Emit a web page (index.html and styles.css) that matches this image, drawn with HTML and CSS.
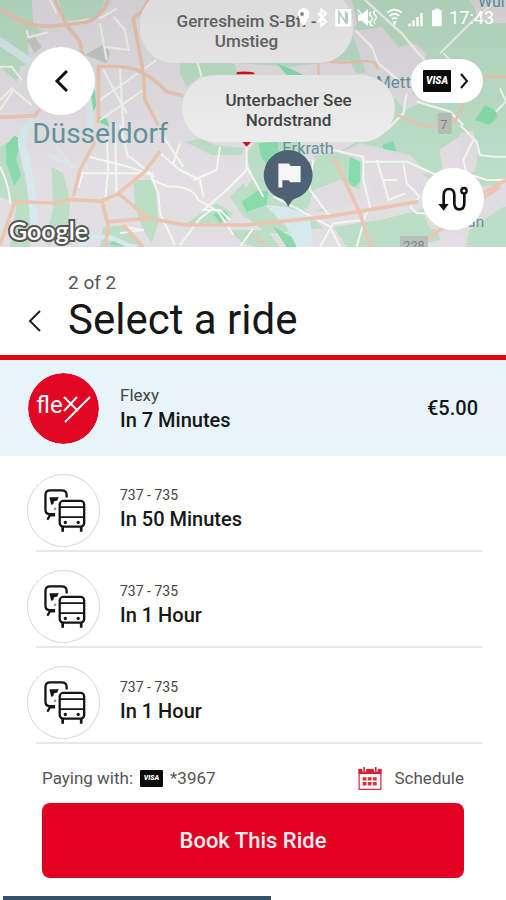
FILE: index.html
```html
<!DOCTYPE html>
<html lang="en">
<head>
<meta charset="utf-8">
<meta name="viewport" content="width=device-width, initial-scale=1">
<title>Select a ride</title>
<link rel="stylesheet" href="styles.css">
</head>
<body>
<svg class="symbols" aria-hidden="true">
  <symbol id="transit" viewBox="126 70 132 136">
    <g fill="none" stroke="#151515" stroke-width="7" stroke-linejoin="round">
      <path d="M165 149h-18q-11-1-11-13V91q0-14 14-14h35q15 0 15 14v8"/>
      <path d="M151 149l-9 17M149 153h16"/>
      <rect x="179" y="109" width="74" height="78" rx="11"/>
      <path d="M179 128h74M179 158h74" stroke-width="5"/>
      <path d="M188 187v15M244 187v15" stroke-width="8"/>
    </g>
    <path d="M148 98h28l-4 10-10 2-3 10h-6z" fill="#151515"/>
    <circle cx="165" cy="133" r="4" fill="#999"/>
    <circle cx="196" cy="174" r="5" fill="#151515"/>
    <circle cx="235" cy="174" r="5" fill="#151515"/>
  </symbol>
</svg>

<main class="app">
  <section class="map" aria-label="Map">
    <svg class="map-canvas" viewBox="0 0 1518 741" preserveAspectRatio="xMidYMid slice" aria-hidden="true">
      <rect width="1518" height="741" fill="#e2dfe2"/>
      <!-- parks and fields -->
      <g fill="#bcdec6">
        <path d="M0 0h95l5 70 25 25-40 20 0 45 15 30-40 10-10 45-50-45z"/>
        <path d="M175 0h140l-20 45-50 20-50-5z"/>
        <path d="M540 190h160l20 35-120 5-40 30-20-40z"/>
        <path d="M700 188h260l90-58 15-45 35-85h318l10 40 45 30h45v340l-40 60-50-40-50-20-60 40 10 60-60 60-110-70-80-20-100 20-40-30 90-20 100-60 60-100-60-70-60 0-20-40-180 20z"/>
        <path d="M1055 0h345l20 65-100 90-70-15-60-60-90 25-30-40z"/>
        <path d="M770 425h130l20 60 90-10 80 0-10 90-110 70-60-10 60 60 170-25 160-40 20 100-90 21h-190l-40-60-200 20-60-50 30-60-10-60-25-70z"/>
        <path d="M740 560l60-80 20 110-20 60-60 0-40-60z"/>
        <path d="M1420 620h98v121h-120z"/>
        <path d="M1380 370l138 10v170l-70 10-40-40 30-80z"/>
        <path d="M0 440l50-25 20 100 30 50-10 176H30l20-130-50-20z"/>
        <path d="M155 500l35 20 20 80-5 80 10 55h-30l-18-55-18 58-15-10 25-100z"/>
        <path d="M400 540h65l10 130-20 60-30-50-20-60z"/>
        <path d="M555 425l50-10 40 20 90 10-10 20-90 0z"/>
        <path d="M690 590l40-40 20 50 10 60-30-10z"/>
        <path d="M300 741l10-60 60-5 55 65z"/>
        <path d="M560 670l90-60 50 30-20 30z"/>
        <path d="M685 690h115l40 51h-70l-40-10z"/>
      </g>
      <!-- woodland -->
      <g fill="#87dbac">
        <path d="M18 435l25-28 20 10-15 60 15 50-20 30-25-70z"/>
        <path d="M640 642l35-12 10 20-25 20z"/>
        <path d="M830 190l50 20 40 20-60-5z"/>
        <path d="M1425 360l30-45 30 15 8 20-25 25z"/>
        <path d="M1148 435l30-12 12 30-38 8z"/>
        <path d="M1050 470l30 15 0 60-20 18-15-20z"/>
        <path d="M725 605l50-35 30 5-5 40-60 20z"/>
        <path d="M820 680l90 50-10 11h-40z"/>
        <path d="M775 430l60-5v50l-20 30-30-30z"/>
        <path d="M300 350q25 0 28 30l-26-10z"/>
        <path d="M330 735l10-20 60 26z"/>
        <path d="M272 290l12-25 5 50-8 20z"/>
      </g>
      <!-- towns -->
      <g fill="#e0dde0">
        <path d="M1055 95l90-15 50 60 55-8 30 30-15 60-30 60 60 10-80 40-40-50-60-20-30-80z"/>
        <path d="M1410 0h108v50l-70 15z"/>
        <path d="M1380 400l40-10 15 70-10 55-50 10z"/>
        <path d="M1085 470l150 30 70 50-60 40-110 15-20-30z"/>
        <path d="M1270 640l80-60 168-25v60l-130 90-100-20z"/>
        <path d="M940 570l80-30 70 35-10 35-160 25z"/>
        <path d="M1020 460l60-30 150 35 60 60-200-40z"/>
        <path d="M255 165l60-35 15 30-10 30z" fill="#c3c9c5"/>
        <path d="M80 120l25-10 20 30-20 20z" fill="#cac8c8"/>
      </g>
      <!-- water -->
      <g fill="none" stroke="#d8e9ed" stroke-width="24" stroke-linecap="round">
        <path d="M0 125l90 60"/>
        <path d="M265 300q8 50 5 80" stroke-width="20"/>
        <path d="M90 370q-35 35-20 80 25 80 33 230"/>
        <path d="M145 465l80 35M170 440l45 60" stroke-width="7"/>
        <path d="M240 735q50-40 110-15 40 20 55 20" stroke-width="14"/>
      </g>
      <path d="M795 615l60 5 75 25 10 96h-50l-30-60z" fill="#d8e9ed"/>
      <!-- local streets -->
      <g fill="none" stroke="#f5f5f3" stroke-width="6" stroke-linejoin="round">
        <path d="M80 90l5 22 60-15M200 70l110-20 40-25M300 70l20 110M340 50l35 40 10 60M310 140l80 10"/>
        <path d="M150 0l20 40M0 200h35l30 40M0 300l35-35 60 50M0 330l40-60"/>
        <path d="M310 210l70 130M300 300l170-120M300 360l130-90M360 205l10 190M590 180l15 50"/>
        <path d="M240 520h220M455 540l50 20q70-5 90 40l60 35 45 70M250 515l-15 50M320 400l5 110-10 90M345 370l5 215M360 375l25 100"/>
        <path d="M265 470l120 30 80 30M390 470l60 50 25 60 5 60 45 95M480 460l60 50 60 30 10 50M520 490l20-60M490 410l60 90"/>
        <path d="M740 440l0 70-60 60-70 60 50 0 30 30M740 500l50 90M660 440l-10 70-70 30M540 735l60-80 40-30"/>
        <path d="M370 680l60 10-70 10M720 741l39-55M0 500q30 60 30 110"/>
        <path d="M1095 0l110 100 50 60 80 90-85 20M1065 90l50 50 20 50 60 50M1220 280l-10 60-50 50-160 30M1250 305l100 30 40 40" stroke-width="7"/>
        <path d="M1320 160l90-90 70-60M1330 160l20 20"/>
        <path d="M1000 450l90 20 0 70 20 80-20 40-90 10-40 71M1090 485h130l90 40M1130 480l25 80 10 40 50-20M1210 490l10 60 40 40M1150 540h40"/>
        <path d="M1380 375l50 50 10 40 40 5h38M1420 420l-30 60 10 40 60 20h58M1230 620l20 20 60 0M1500 265l18 40-30 30"/>
        <path d="M820 590l60 30 110 60 30 61M940 480l-10 60 0 30 60 80M1090 670l-20 71M1260 590l-30 30"/>
      </g>
      <!-- arterial roads -->
      <g fill="none" stroke="#eac6b2" stroke-width="11" stroke-linejoin="round">
        <path d="M0 30l20 8q60 45 140 40l100-12q45-15 65-66M165 0l35 75 40 50 8 45M445 0q-10 30-45 55l30 165 5 80 40 75M290 200q80-5 120 10 50 20 90 65l50 12M295 205v165M0 352l105-5 15-20"/>
        <path d="M0 735l45-130 120 4 50-10 85 5 50-20 85-70 45-60M220 590l20-80 45-85M305 600l20 80-10 61M325 665l120-10 110 20 180 0 250-25 270-45"/>
        <path d="M355 580l90 75M370 675l60 66M1000 470l80 170 30 101M1518 540l-80 45M1500 560l-60 40-160 120"/>
        <path d="M955 190v35M955 183l70 5 75-5 25 5 10 20M1390 310l-25 55-90 15-85-35M1450 230h68M759 700l40 41" stroke-width="8"/>
      </g>
      <g fill="#b8bfba">
        <rect x="1313" y="338" width="42" height="64" rx="4"/>
        <rect x="1200" y="708" width="84" height="33" rx="4"/>
      </g>
      <g class="map-text">
        <text x="97" y="428" font-size="84">Düsseldorf</text>
        <text x="1128" y="264" font-size="51">Mett</text>
        <text x="847" y="462" font-size="49">Erkrath</text>
        <text x="1434" y="20" font-size="48">Wül</text>
        <text x="1402" y="681" font-size="46">an</text>
        <text x="1321" y="386" font-size="38" class="road-no">7</text>
        <text x="1210" y="749" font-size="38" class="road-no">228</text>
      </g>
      <path d="M710 217q18-5 50 0l5 6h-55z" fill="#d40f20"/>
      <path d="M722 420h36l-18 20z" fill="#d40f20"/>
    </svg>

    <p class="place place-start">Gerresheim S-Bf. -<br>Umstieg</p>
    <p class="place place-end">Unterbacher See<br>Nordstrand</p>

    <svg class="flag-pin" viewBox="0 0 150 172" aria-hidden="true">
      <path d="M75 0a75 75 0 0 1 20 147q-8 3-19 24-11-21-20-24A75 75 0 0 1 75 0z" fill="#4f6275"/>
      <path d="M46 41h32l5 7h30v49H82l-5-6H58v22H46z" fill="#f6f6f6"/>
    </svg>

    <div class="status">
      <svg class="status-icons" viewBox="0 0 450 66" aria-hidden="true">
        <g fill="#fff">
          <path d="M20 3a17 17 0 0 1 17 17c0 15-17 36-17 36S3 35 3 20A17 17 0 0 1 20 3z"/>
          <circle cx="15" cy="21" r="6" fill="#888"/>
          <path d="M115 6h48v52h-48z"/>
          <path d="M183 22h12l18-15v50l-18-15h-12z"/>
          <path d="M334 50h7v8h-7zM346 40h7v18h-7zM358 30h7v28h-7zM370 18h7v40h-7z"/>
          <path d="M405 10h8V5h14v5h7v48h-29z"/>
        </g>
        <path d="M126 50V15l20 31V13M151 50V17" fill="none" stroke="#bcc9c2" stroke-width="5"/>
        <path d="M63 18l24 26-14 12V7l14 12-24 26" fill="none" stroke="#fff" stroke-width="6"/>
        <path d="M182 8l45 50M222 14q-8 8 0 14t0 14q-5 7 0 14M234 10q-8 8 0 14t0 14q-5 7 0 14" fill="none" stroke="#fff" stroke-width="4"/>
        <path d="M271 17q21-18 43 0M278 27q15-13 29 0M285 36q8-7 15 0" fill="none" stroke="#fff" stroke-width="5"/>
        <path d="M287 43l6 13 6-13z" fill="#fff"/>
      </svg>
      <time class="clock">17:43</time>
    </div>

    <button class="round-button map-back" type="button" aria-label="Back">
      <svg class="chevron" viewBox="0 0 14 24" aria-hidden="true"><path d="M13 2L3 12l10 10"/></svg>
    </button>
    <button class="payment-pill" type="button" aria-label="Payment method">
      <span class="visa visa-large">VISA</span>
      <svg class="pill-chevron" viewBox="0 0 10 16" aria-hidden="true"><path d="M2 1l6 7-6 7"/></svg>
    </button>
    <button class="round-button map-route" type="button" aria-label="Show route">
      <svg class="route-icon" viewBox="0 0 90 78" aria-hidden="true">
        <path d="M17 58V28q0-19 16-19t16 19v23q0 19 15 19t15-19V24" fill="none" stroke="#111" stroke-width="8"/>
        <path d="M1 54h31L17 74z" fill="#111"/>
        <circle cx="78" cy="14" r="8" fill="#fff" stroke="#111" stroke-width="7"/>
      </svg>
    </button>
    <span class="google">Google</span>
  </section>

  <header class="header">
    <button class="header-back" type="button" aria-label="Previous step">
      <svg class="header-chevron" viewBox="0 0 14 22" aria-hidden="true"><path d="M12 1L2 11l10 10"/></svg>
    </button>
    <div>
      <p class="step">2 of 2</p>
      <h1 class="title">Select a ride</h1>
    </div>
  </header>

  <section class="rides" aria-label="Rides">
    <article class="ride ride-selected">
      <span class="badge badge-flexy">
        <span class="flexy-name">fle<svg class="flexy-tail" viewBox="0 0 28 30" aria-hidden="true"><path d="M1 4l14 14M1 18L14 4M27 4L2 29"/></svg></span>
      </span>
      <div class="ride-text">
        <p class="ride-line ride-service">Flexy</p>
        <h2 class="ride-time">In 7 Minutes</h2>
      </div>
      <p class="price">€5.00</p>
    </article>
    <article class="ride">
      <span class="badge"><svg class="transit-icon" aria-hidden="true"><use href="#transit"/></svg></span>
      <div class="ride-text">
        <p class="ride-line">737 - 735</p>
        <h2 class="ride-time">In 50 Minutes</h2>
      </div>
    </article>
    <article class="ride">
      <span class="badge"><svg class="transit-icon" aria-hidden="true"><use href="#transit"/></svg></span>
      <div class="ride-text">
        <p class="ride-line">737 - 735</p>
        <h2 class="ride-time">In 1 Hour</h2>
      </div>
    </article>
    <article class="ride">
      <span class="badge"><svg class="transit-icon" aria-hidden="true"><use href="#transit"/></svg></span>
      <div class="ride-text">
        <p class="ride-line">737 - 735</p>
        <h2 class="ride-time">In 1 Hour</h2>
      </div>
    </article>
  </section>

  <footer class="footer">
    <div class="options">
      <p class="paying">Paying with: <span class="visa">VISA</span> *3967</p>
      <button class="schedule" type="button">
        <svg class="calendar" viewBox="0 0 72 72" aria-hidden="true">
          <path d="M2 8h68v62H2z" fill="#fff" stroke="#df3440" stroke-width="4"/>
          <path d="M0 6h72v16H0z" fill="#d9202c"/>
          <path d="M18 0v14M54 0v14" stroke="#fff" stroke-width="12"/>
          <path d="M18 0v14M54 0v14" stroke="#d9202c" stroke-width="5"/>
          <path d="M13 32h12v10H13zM29 32h12v10H29zM45 32h12v10H45zM13 47h12v11H13zM29 47h12v11H29zM45 47h12v11H45z" fill="#d9303c"/>
        </svg>
        Schedule
      </button>
    </div>
    <button class="book" type="button">Book This Ride</button>
    <div class="progress"><span class="progress-bar"></span></div>
  </footer>
</main>
</body>
</html>
```

FILE: styles.css
```css
* { box-sizing: border-box; }

body {
  margin: 0;
  background: #fff;
  color: #171717;
  font-family: Roboto, "Liberation Sans", sans-serif;
}

p, h1, h2 { margin: 0; }

button {
  border: 0;
  padding: 0;
  background: none;
  color: inherit;
  font: inherit;
  cursor: pointer;
}

svg { display: block; }
.symbols { position: absolute; width: 0; height: 0; }

.app {
  display: flex;
  flex-direction: column;
  min-height: 100vh;
}

/* Map */
.map {
  position: relative;
  height: 247px;
  overflow: hidden;
}
.map-canvas { width: 100%; height: 100%; }
.map::after {
  content: "";
  position: absolute;
  inset: 0;
  background: linear-gradient(rgba(0, 0, 0, 0.08), transparent 70%);
  pointer-events: none;
}
.map-text { fill: #64949f; }
.road-no { fill: #7f8582; }

.place {
  position: absolute;
  width: 213px;
  border-radius: 34px;
  background: #efefef;
  color: #454545;
  font-size: 17px;
  font-weight: 500;
  line-height: 20px;
  text-align: center;
}
.place-start { top: -10px; left: 140px; padding: 21px 0 12px; color: #666; }
.place-end { top: 75px; left: 182px; padding: 15px 0 12px; }

.flag-pin {
  position: absolute;
  top: 150px;
  left: 263px;
  width: 50px;
  height: 57px;
}

.status {
  position: absolute;
  z-index: 2;
  top: 7px;
  right: 12px;
  display: flex;
  align-items: center;
  gap: 2px;
  color: #fff;
}
.status-icons { width: 150px; height: 22px; }
.clock { font-size: 18px; line-height: 22px; }

.round-button {
  position: absolute;
  z-index: 2;
  display: grid;
  place-items: center;
  border-radius: 50%;
  background: #fff;
}
.map-back { top: 47px; left: 27px; width: 68px; height: 68px; }
.map-route { top: 168px; right: 22px; width: 62px; height: 62px; }
.chevron { width: 14px; height: 24px; fill: none; stroke: #111; stroke-width: 3; }
.route-icon { width: 30px; height: 26px; }

.payment-pill {
  position: absolute;
  z-index: 2;
  top: 59px;
  right: 23px;
  display: flex;
  align-items: center;
  gap: 8px;
  height: 44px;
  padding: 0 14px 0 12px;
  border-radius: 22px;
  background: #fff;
}
.pill-chevron { width: 10px; height: 16px; fill: none; stroke: #111; stroke-width: 2; }

.visa {
  display: inline-grid;
  place-items: center;
  width: 23px;
  height: 17px;
  border-radius: 1px;
  background: #0b0b0b;
  color: #fff;
  font-size: 7px;
  font-style: italic;
  font-weight: 900;
  line-height: 1;
}
.visa-large { width: 28px; height: 22px; font-size: 10px; }

.google {
  position: absolute;
  z-index: 2;
  top: 215px;
  left: 9px;
  color: #fff;
  font-family: Lato, sans-serif;
  font-size: 25px;
  font-weight: 600;
  line-height: 30px;
  -webkit-text-stroke: 4px #555;
  paint-order: stroke fill;
}

/* Header */
.header {
  display: flex;
  align-items: flex-end;
  height: 113px;
  padding: 0 28px 10px;
  border-bottom: 5px solid #dc0a14;
}
.header-back {
  display: flex;
  align-items: center;
  width: 40px;
  height: 48px;
}
.header-chevron { width: 14px; height: 22px; fill: none; stroke: #222; stroke-width: 2; }
.step { color: #555; font-size: 19px; line-height: 24px; }
.title { font-size: 42px; font-weight: 400; line-height: 50px; }

/* Rides */
.ride {
  position: relative;
  display: flex;
  align-items: center;
  gap: 20px;
  height: 96px;
  padding: 12px 28px 0 27px;
}
.ride:not(.ride-selected)::after {
  content: "";
  position: absolute;
  right: 24px;
  bottom: 0;
  left: 36px;
  height: 2px;
  background: #e8e8e8;
}
.ride-selected { padding-top: 0; background: #e7f4fa; }

.badge {
  display: grid;
  flex: none;
  place-items: center;
  width: 73px;
  height: 73px;
  border: 1px solid #d8d8d8;
  border-radius: 50%;
  background: #fff;
}
.badge-flexy {
  border: 1px solid #e7f4fa;
  background: #e20524;
  background-clip: padding-box;
  color: #fff;
}
.transit-icon { width: 44px; height: 45px; }
.flexy-name {
  display: flex;
  align-items: flex-start;
  font-size: 24px;
  line-height: 24px;
}
.flexy-tail { width: 28px; height: 30px; fill: none; stroke: #fff; stroke-width: 2; }

.ride-text { flex: 1; padding-bottom: 4px; }
.ride-line { color: #444; font-size: 14px; line-height: 22px; }
.ride-time { font-size: 20px; font-weight: 500; line-height: 26px; }
.price { font-size: 20px; font-weight: 500; }
.ride-selected .ride-text { padding: 0; }
.ride-service { font-size: 17px; line-height: 24px; }

/* Footer */
.footer {
  display: flex;
  flex: 1;
  flex-direction: column;
  padding: 19px 42px 0;
}
.options {
  display: flex;
  align-items: center;
  justify-content: space-between;
  height: 30px;
  color: #555;
  font-size: 17px;
}
.paying { display: flex; align-items: center; gap: 7px; }
.schedule { display: flex; align-items: center; gap: 13px; }
.calendar { width: 24px; height: 23px; }
.book {
  height: 75px;
  margin-top: 10px;
  border-radius: 8px;
  background: #e10022;
  color: #fdeeee;
  font-size: 22px;
  font-weight: 500;
}
.progress {
  margin: auto -42px 0;
  background: #fff;
}
.progress-bar {
  display: block;
  width: 53%;
  height: 4px;
  margin-left: 3px;
  background: #34536a;
}
```
